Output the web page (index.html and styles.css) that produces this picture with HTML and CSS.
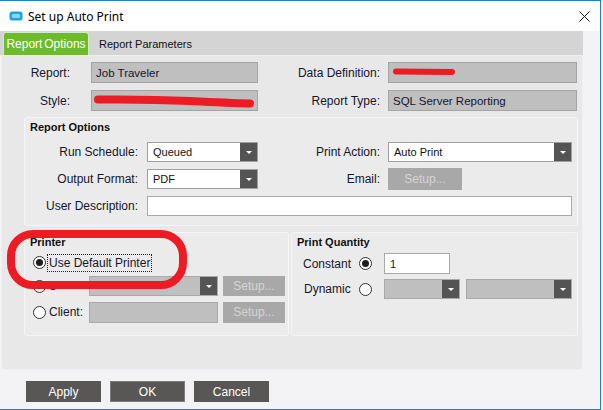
FILE: index.html
```html
<!DOCTYPE html>
<html>
<head>
<meta charset="utf-8">
<link rel="stylesheet" href="styles.css">
</head>
<body>
<div class="window">
  <div class="titlebar">
    <svg class="app-icon" width="14" height="10" viewBox="0 0 14 10"><rect x="0.5" y="0.5" width="13" height="9" rx="2.5" fill="#1ea3e0"/><rect x="3" y="3" width="8" height="4" rx="1" fill="#8fd6f6"/></svg>
    <span class="title">Set up Auto Print</span>
    <svg class="close" width="11" height="11" viewBox="0 0 11 11"><path d="M0.5 0.5 L10.5 10.5 M10.5 0.5 L0.5 10.5" stroke="#111" stroke-width="1"/></svg>
  </div>
  <div class="tabs">
    <div class="tab active">Report Options</div>
    <div class="tab">Report Parameters</div>
  </div>
  <div class="panel">
    <div class="top-grid">
      <div class="lbl l1">Report:</div>
      <div class="field ro">Job Traveler</div>
      <div class="lbl l2">Data Definition:</div>
      <div class="field ro"></div>
      <div class="lbl l1">Style:</div>
      <div class="field ro"></div>
      <div class="lbl l2">Report Type:</div>
      <div class="field ro">SQL Server Reporting</div>
    </div>

    <div class="group options">
      <div class="gtitle">Report Options</div>
      <div class="opt-grid">
        <div class="lbl lo1">Run Schedule:</div>
        <div class="combo"><span class="val">Queued</span><span class="dd"><i></i></span></div>
        <div class="lbl lo2">Print Action:</div>
        <div class="combo"><span class="val">Auto Print</span><span class="dd"><i></i></span></div>

        <div class="lbl lo1">Output Format:</div>
        <div class="combo mid"><span class="val">PDF</span><span class="dd"><i></i></span></div>
        <div class="lbl lo2">Email:</div>
        <div class="setup email">Setup...</div>

        <div class="lbl lo1">User Description:</div>
        <div class="field white span3"></div>
      </div>
    </div>

    <div class="bottom-row">
      <div class="group printer">
        <div class="gtitle">Printer</div>
        <div class="prow r1">
          <span class="radio on"></span><span class="rtext focus">Use Default Printer</span>
        </div>
        <div class="prow r2">
          <div class="pcell"><span class="radio"></span><span class="rtext">S</span></div>
          <div class="combo gray pcombo"><span class="val"></span><span class="dd"><i></i></span></div>
          <div class="setup psetup">Setup...</div>
        </div>
        <div class="prow r3">
          <div class="pcell"><span class="radio"></span><span class="rtext">Client:</span></div>
          <div class="field gray pcombo"></div>
          <div class="setup psetup">Setup...</div>
        </div>
      </div>
      <div class="group qty">
        <div class="gtitle">Print Quantity</div>
        <div class="qrow q1">
          <span class="qlbl">Constant</span><span class="radio on"></span>
          <div class="field white qinput">1</div>
        </div>
        <div class="qrow q2">
          <span class="qlbl dyn">Dynamic</span><span class="radio"></span>
          <div class="combo gray qc1"><span class="val"></span><span class="dd"><i></i></span></div>
          <div class="combo gray qc2"><span class="val"></span><span class="dd"><i></i></span></div>
        </div>
      </div>
    </div>
  </div>
  <div class="footer">
    <div class="btn">Apply</div>
    <div class="btn ok">OK</div>
    <div class="btn">Cancel</div>
  </div>
  <svg class="marks" width="601" height="410" viewBox="0 0 601 410">
    <path d="M98 99.5 Q150 99 190 101 T250 103.5" stroke="#ed1c24" stroke-width="8" stroke-linecap="round" fill="none"/>
    <path d="M396 71.5 L452 72" stroke="#ed1c24" stroke-width="6" stroke-linecap="round" fill="none"/>
    <rect x="11" y="234" width="172" height="51" rx="22" ry="22" stroke="#ed1c24" stroke-width="8" fill="none"/>
  </svg>
</div>
</body>
</html>
```

FILE: styles.css
```css
html, body {
  margin: 0;
  padding: 0;
  background: #ffffff;
}

.window {
  position: relative;
  width: 601px;
  height: 410px;
  box-sizing: border-box;
  border-top: 1px solid #1a7fd4;
  border-right: 1px solid #1a7fd4;
  border-bottom: 1px solid #1a7fd4;
  background: #f3f3f5;
  font-family: "Liberation Sans", Arial, sans-serif;
  font-size: 12px;
  color: #16162c;
  overflow: hidden;
}

.titlebar {
  height: 30px;
  background: #ffffff;
  display: flex;
  align-items: center;
}

.app-icon {
  margin-left: 9px;
  flex: none;
}

.title {
  margin-left: 5px;
  font-family: "Noto Sans", "Open Sans", sans-serif;
  font-size: 12px;
  color: #000;
}

.close {
  margin-left: auto;
  margin-right: 10px;
}

.tabs {
  width: 583px;
  height: 24px;
  background: #d4d4d4;
  display: flex;
  align-items: flex-end;
}

.tab {
  height: 23px;
  display: flex;
  align-items: center;
  padding-left: 10px;
  font-size: 11px;
  color: #111;
}

.tab.active {
  margin-left: 3px;
  width: 86px;
  padding-left: 0;
  box-sizing: border-box;
  justify-content: center;
  background: #6cbb2c;
  color: #ffffff;
  border: 1px solid #d6ecc0;
  border-bottom: none;
  border-radius: 3px 3px 0 0;
  font-size: 12px;
  word-spacing: -1.5px;
}

.panel {
  position: relative;
  margin-left: 1px;
  width: 582px;
  height: 315px;
  box-sizing: border-box;
  background: #e8e8e8;
  border: 1px solid #f0f0f0;
  border-radius: 0 0 4px 4px;
  padding-top: 6px;
}

.top-grid {
  display: grid;
  grid-template-columns: 89px 167px 130px 189px;
  grid-auto-rows: 21px;
  row-gap: 7px;
}

.lbl {
  display: flex;
  align-items: center;
  justify-content: flex-end;
  white-space: nowrap;
}

.l1 { padding-right: 21px; }
.l2 { padding-right: 8px; }
.lo1 { padding-right: 9px; }
.lo2 { padding-right: 8px; }

.field {
  box-sizing: border-box;
  display: flex;
  align-items: center;
  padding-left: 4px;
  font-size: 11.5px;
  color: #16162c;
}

.field.ro {
  background: #bfbfbf;
  border: 1px solid #a4a4a4;
}

.field.white {
  background: #ffffff;
  border: 1px solid #a9a9a9;
}

.field.gray {
  background: #bfbfbf;
  border: 1px solid #a9a9a9;
}

.span3 {
  grid-column: 2 / span 3;
}

.group {
  box-sizing: border-box;
  border: 1px solid #f6f6f6;
  border-radius: 3px;
  background: #ebebeb;
}

.gtitle {
  font-weight: bold;
  font-size: 11px;
  line-height: 14px;
  padding: 2px 0 0 5px;
  color: #111;
}

.options {
  margin: 6px 0 0 22px;
  width: 554px;
  height: 109px;
}

.opt-grid {
  margin-top: 8px;
  display: grid;
  grid-template-columns: 122px 111px 130px 184px;
  grid-template-rows: 20px 22px 20px;
  row-gap: 6px;
}

.combo {
  display: flex;
  box-sizing: border-box;
  height: 20px;
  background: #ffffff;
  border: 1px solid #a0a0a0;
}

.combo.mid {
  align-self: center;
}

.combo.gray {
  background: #bfbfbf;
  border-color: #a9a9a9;
}

.combo .val {
  flex: 1;
  padding-left: 5px;
  display: flex;
  align-items: center;
  font-size: 11px;
  color: #111;
}

.combo .dd {
  width: 17px;
  flex: none;
  background: #545454;
  display: flex;
  align-items: center;
  justify-content: center;
}

.combo .dd i {
  width: 0;
  height: 0;
  border-left: 3px solid transparent;
  border-right: 3px solid transparent;
  border-top: 3px solid #ffffff;
}

.setup {
  box-sizing: border-box;
  background: #a8a8a8;
  color: #d4d4d4;
  font-size: 12px;
  display: flex;
  align-items: center;
  justify-content: center;
}

.email {
  width: 74px;
  justify-self: start;
}

.bottom-row {
  display: flex;
  gap: 2px;
  margin: 6px 0 0 22px;
}

.printer {
  width: 265px;
  height: 104px;
}

.qty {
  width: 287px;
  height: 104px;
}

.radio {
  width: 13px;
  height: 13px;
  flex: none;
  box-sizing: border-box;
  border-radius: 50%;
  border: 1px solid #333;
  background: #ffffff;
  display: flex;
  align-items: center;
  justify-content: center;
}

.radio.on::after {
  content: "";
  width: 7px;
  height: 7px;
  border-radius: 50%;
  background: #1e1e1e;
}

.rtext {
  margin-left: 3px;
  white-space: nowrap;
}

.rtext.focus {
  margin-left: 2px;
  padding: 1px 1px;
  line-height: 14px;
  outline: 1px dotted #222;
}

.prow {
  display: flex;
  align-items: center;
}

.prow.r1 {
  margin-top: 3px;
  height: 21px;
  padding-left: 8px;
}

.prow.r2 {
  margin-top: 3px;
  height: 20px;
}

.prow.r3 {
  margin-top: 6px;
  height: 20px;
}

.pcell {
  width: 64px;
  box-sizing: border-box;
  padding-left: 8px;
  display: flex;
  align-items: center;
  height: 100%;
}

.pcombo {
  width: 129px;
  height: 20px;
}

.psetup {
  margin-left: 5px;
  width: 62px;
  height: 20px;
}

.prow.r3 .pcombo,
.prow.r3 .psetup {
  height: 21px;
}

.qrow {
  display: flex;
  align-items: center;
  padding-left: 11px;
}

.qrow.q1 {
  margin-top: 4px;
  height: 21px;
}

.qrow.q2 {
  margin-top: 5px;
  height: 20px;
}

.qlbl {
  width: 56px;
  flex: none;
  white-space: nowrap;
}

.qlbl.dyn {
  padding-left: 1px;
  width: 55px;
}

.qinput {
  margin-left: 12px;
  width: 66px;
  height: 21px;
  font-size: 11px;
  padding-left: 5px;
}

.qc1 {
  margin-left: 12px;
  width: 76px;
}

.qc2 {
  margin-left: 6px;
  width: 106px;
}

.footer {
  display: flex;
  gap: 9px;
  padding: 11px 0 0 26px;
}

.btn {
  width: 75px;
  height: 21px;
  box-sizing: border-box;
  background: #595755;
  border: 1px solid #595755;
  color: #ffffff;
  font-size: 12px;
  display: flex;
  align-items: center;
  justify-content: center;
}

.btn.ok {
  border-color: #7d7d7d;
}

.marks {
  position: absolute;
  left: 0;
  top: -1px;
  pointer-events: none;
}
```
